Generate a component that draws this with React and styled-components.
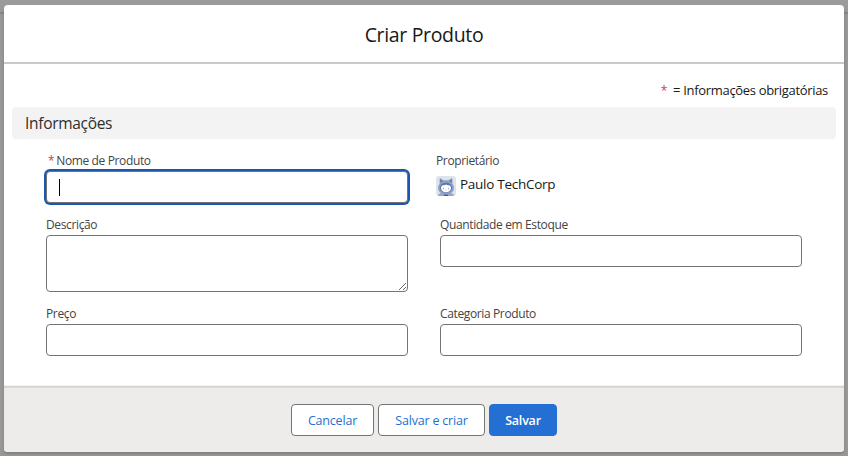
import React from 'react';
import styled, { createGlobalStyle, css } from 'styled-components';

const GlobalStyle = createGlobalStyle`
  *, *::before, *::after { box-sizing: border-box; }
  html, body { margin: 0; height: 100%; overflow: hidden; }
  body {
    font-family: 'Open Sans', 'Noto Sans', sans-serif;
    color: #181818;
    background: #999;
  }
`;

const Backdrop = styled.div`
  height: 456px;
  padding: 5px 4px 4px;
  background: linear-gradient(#9b9b9b 0 12px, #868686 12px 14px, #999897 14px);
`;

const Modal = styled.section`
  height: 447px;
  display: flex;
  flex-direction: column;
  border-radius: 4px;
  overflow: hidden;
  background: #fff;
  box-shadow: 0 2px 3px rgba(0, 0, 0, 0.16);
`;

const Header = styled.header`
  height: 59px;
  flex: none;
  display: flex;
  align-items: center;
  justify-content: center;
  border-bottom: 2px solid #c9c9c9;
  padding-top: 3px;
`;

const Title = styled.h1`
  margin: 0;
  font-size: 19.5px;
  font-weight: 400;
  letter-spacing: -0.34px;
  line-height: 24px;
`;

const Body = styled.div`
  height: 322px;
  flex: none;
  padding: 16px 8px 0;
`;

const Legend = styled.div`
  display: flex;
  justify-content: flex-end;
  gap: 6px;
  height: 27px;
  padding-right: 8px;
  font-size: 13px;
  letter-spacing: -0.32px;
  line-height: 21px;
`;

const Required = styled.abbr`
  color: #d0394a;
  text-decoration: none;
  font-size: 12px;
`;

const SectionTitle = styled.h2`
  height: 32px;
  margin: 0;
  padding-left: 13px;
  border-radius: 4px;
  background: #f3f3f3;
  color: #2e2e2e;
  font-size: 15.5px;
  font-weight: 400;
  letter-spacing: -0.3px;
  line-height: 33px;
`;

const Fields = styled.div`
  display: grid;
  grid-template-columns: 362px 362px;
  grid-template-rows: 64px 89px 60px;
  column-gap: 32px;
  padding: 14px 0 0 34px;
`;

const Field = styled.div`
  display: flex;
  flex-direction: column;
  ${({ $readOnly }) => $readOnly && css`margin-left: -4px;`}
`;

const Label = styled.label`
  display: flex;
  gap: 2px;
  height: 18px;
  flex: none;
  color: #444;
  font-size: 12px;
  letter-spacing: -0.37px;
  line-height: 15px;
  white-space: nowrap;
  ${({ $required }) => $required && css`padding-left: 2px;`}
`;

const box = css`
  display: block;
  width: 100%;
  margin: 0;
  border: 1px solid #747474;
  border-radius: 4px;
  background: #fff;
  outline: none;
  font: inherit;
`;

const TextInput = styled.input`
  ${box}
  height: 32px;
  padding: 0 12px;
`;

const FocusedInput = styled.div`
  ${box}
  height: 32px;
  padding: 7px 12px;
  box-shadow: 0 0 0 2px #1b57b0;
`;

const Caret = styled.span`
  display: block;
  width: 1px;
  height: 17px;
  background: #000;
`;

const TextArea = styled.textarea`
  ${box}
  height: 57px;
  padding: 8px 12px;
  resize: vertical;
`;

const Owner = styled.div`
  display: flex;
  gap: 4px;
  padding-top: 5px;
`;

const AvatarIcon = styled.svg`
  width: 20px;
  height: 20px;
  flex: none;
`;

const OwnerName = styled.span`
  font-size: 13.5px;
  letter-spacing: -0.27px;
  line-height: 17px;
`;

const Footer = styled.footer`
  flex: 1;
  display: flex;
  justify-content: center;
  gap: 4px;
  padding-top: 16px;
  border-top: 2px solid #d8d7d6;
  background: #edeceb;
  box-shadow: 0 -1px 0 #f1f1f1;
`;

const Button = styled.button`
  width: ${({ $width }) => $width}px;
  height: 32px;
  padding: 2px 0 0;
  border: 1px solid ${({ $brand }) => ($brand ? '#246fd3' : '#747474')};
  border-radius: 4px;
  background: ${({ $brand }) => ($brand ? '#246fd3' : '#fff')};
  color: ${({ $brand }) => ($brand ? '#fff' : '#246fd3')};
  font-family: inherit;
  font-size: 12.5px;
  letter-spacing: -0.2px;
  font-weight: ${({ $brand }) => ($brand ? 600 : 400)};
  line-height: 28px;
`;

function Avatar() {
  return (
    <AvatarIcon viewBox="0 0 20 20" aria-hidden="true">
      <defs>
        <clipPath id="avatar-frame">
          <rect width="20" height="20" rx="3" />
        </clipPath>
      </defs>
      <g clipPath="url(#avatar-frame)">
        <rect width="20" height="20" fill="#dfe3ea" />
        <path d="M2 20c0-2.500 3-3.500 8-3.500s8 1 8 3.500z" fill="#94a8d0" />
        <path
          d="M3.600 3.200q0-1.400 1.200-.8L7.500 4.300h5l2.700-1.900q1.200-.6 1.200.8v4.600c1 1.500 1.500 2.700 1.500 4.200 0 4-3.500 6-7.900 6s-7.900-2-7.900-6c0-1.500.5-2.700 1.500-4.200z"
          fill="#8c9fc6"
        />
        <path d="M4.300 3.400l2.300 1.700-2.200 1.500zM15.700 3.400l-2.300 1.700 2.200 1.500z" fill="#5f759f" />
        <ellipse cx="10" cy="11.800" rx="6" ry="5" fill="#5d75a5" />
        <path d="M5 12c0-1.800 1-3 2.300-2.800 1 .2 1.700-.2 2.700-.6 1 .4 1.700.8 2.700.6C14 9 15 10.200 15 12c0 2.700-2.200 4.200-5 4.200S5 14.700 5 12z" fill="#fff" />
        <path d="M7.500 12v1.200M12.500 12v1.200" stroke="#8a9bc0" strokeWidth=".9" />
        <path d="M9 14h2" stroke="#c7cfe0" strokeWidth=".7" />
        <path d="M7.500 20l1-1.500h3l1 1.500z" fill="#435c91" />
      </g>
    </AvatarIcon>
  );
}

export default function App() {
  return (
    <>
      <GlobalStyle />
      <Backdrop>
        <Modal role="dialog" aria-labelledby="modal-title">
          <Header>
            <Title id="modal-title">Criar Produto</Title>
          </Header>
          <Body>
            <Legend>
              <Required>*</Required>
              <span>= Informações obrigatórias</span>
            </Legend>
            <SectionTitle>Informações</SectionTitle>
            <Fields>
              <Field>
                <Label $required>
                  <Required>*</Required>
                  <span>Nome de Produto</span>
                </Label>
                <FocusedInput role="textbox" aria-label="Nome de Produto">
                  <Caret />
                </FocusedInput>
              </Field>
              <Field $readOnly>
                <Label as="span">Proprietário</Label>
                <Owner>
                  <Avatar />
                  <OwnerName>Paulo TechCorp</OwnerName>
                </Owner>
              </Field>
              <Field>
                <Label htmlFor="descricao">Descrição</Label>
                <TextArea id="descricao" />
              </Field>
              <Field>
                <Label htmlFor="quantidade">Quantidade em Estoque</Label>
                <TextInput id="quantidade" />
              </Field>
              <Field>
                <Label htmlFor="preco">Preço</Label>
                <TextInput id="preco" />
              </Field>
              <Field>
                <Label htmlFor="categoria">Categoria Produto</Label>
                <TextInput id="categoria" />
              </Field>
            </Fields>
          </Body>
          <Footer>
            <Button $width={83}>Cancelar</Button>
            <Button $width={107}>Salvar e criar</Button>
            <Button $width={68} $brand>Salvar</Button>
          </Footer>
        </Modal>
      </Backdrop>
    </>
  );
}
